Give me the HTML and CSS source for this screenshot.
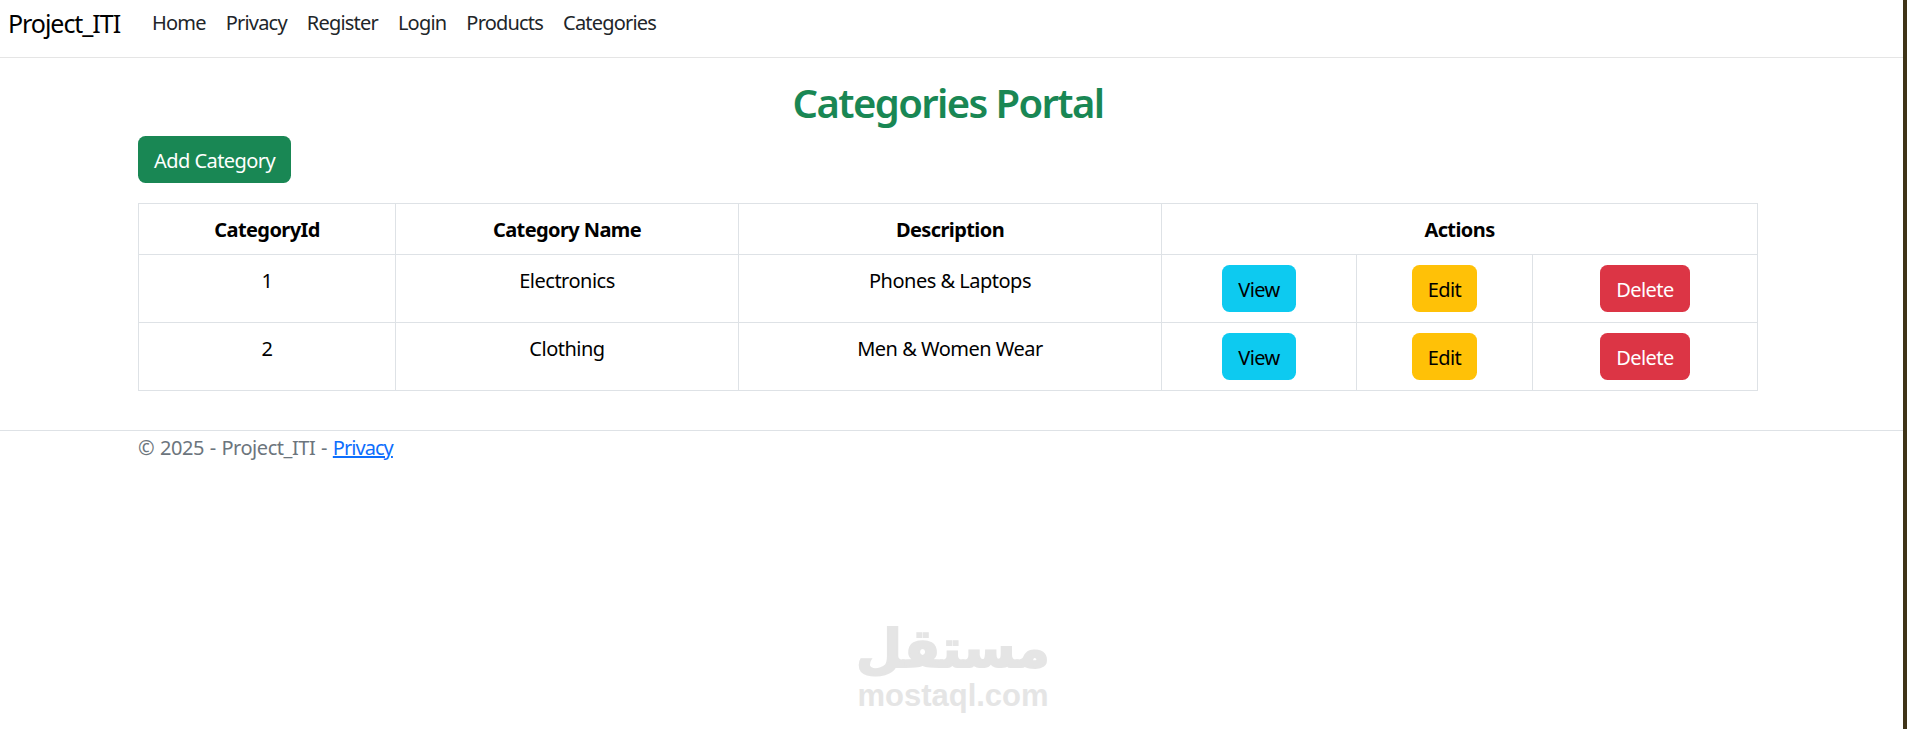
FILE: index.html
```html
<!DOCTYPE html>
<html lang="en">
<head>
  <meta charset="UTF-8" />
  <meta name="viewport" content="width=device-width, initial-scale=1.0"/>
  <title>Categories Portal - Project_ITI</title>
  <link rel="stylesheet" href="styles.css">
</head>
<body>
  <div class="page">
    <!-- Top Nav -->
    <nav class="navbar">
      <a class="brand" href="#">Project_ITI</a>
      <ul class="nav-links">
        <li><a href="#">Home</a></li>
        <li><a href="#">Privacy</a></li>
        <li><a href="#">Register</a></li>
        <li><a href="#">Login</a></li>
        <li><a href="#">Products</a></li>
        <li><a href="#">Categories</a></li>
      </ul>
    </nav>

    <main class="container">
      <h1 class="title">Categories Portal</h1>
      <a class="btn btn-success" href="#">Add Category</a>

      <table class="grid">
        <colgroup>
          <col class="col-id">
          <col class="col-name">
          <col class="col-desc">
          <col class="col-view">
          <col class="col-edit">
          <col class="col-delete">
        </colgroup>
        <thead>
          <tr>
            <th>CategoryId</th>
            <th>Category Name</th>
            <th>Description</th>
            <th colspan="3">Actions</th>
          </tr>
        </thead>
        <tbody>
          <tr>
            <td>1</td>
            <td>Electronics</td>
            <td>Phones &amp; Laptops</td>
            <td class="action"><a class="btn btn-info" href="#">View</a></td>
            <td class="action"><a class="btn btn-warning" href="#">Edit</a></td>
            <td class="action"><a class="btn btn-danger" href="#">Delete</a></td>
          </tr>
          <tr>
            <td>2</td>
            <td>Clothing</td>
            <td>Men &amp; Women Wear</td>
            <td class="action"><a class="btn btn-info" href="#">View</a></td>
            <td class="action"><a class="btn btn-warning" href="#">Edit</a></td>
            <td class="action"><a class="btn btn-danger" href="#">Delete</a></td>
          </tr>
        </tbody>
      </table>
    </main>

    <footer class="footer">
      <div class="footer-inner">© 2025 - Project_ITI - <a href="#">Privacy</a></div>
    </footer>
  </div>
  <div class="edge-strip"></div>

  <!-- Watermark -->
  <div class="watermark">
    <span class="wm-ar" lang="ar" dir="rtl">مستقل</span>
    <span class="wm-en">mostaql.com</span>
  </div>
</body>
</html>
```

FILE: styles.css
```css
* {
  box-sizing: border-box;
}

body {
  margin: 0;
  height: 729px;
  display: flex;
  overflow: hidden;
  background: #fff;
  color: #000;
  font-family: "Noto Sans", sans-serif;
  font-size: 20px;
  line-height: 1.5;
  letter-spacing: -0.5px;
}

.page {
  flex: 1;
  min-width: 0;
}

.edge-strip {
  width: 4px;
  background: #3f3418;
}

/* Top Nav */
.navbar {
  display: flex;
  height: 58px;
  padding: 0 8px 11px;
  border-bottom: 1px solid #e5e5e5;
}

.brand {
  width: 134px;
  padding-top: 5px;
  color: #000;
  font-size: 25px;
  letter-spacing: -1.05px;
  text-decoration: none;
}

.nav-links {
  display: flex;
  margin: 0;
  padding: 0;
  list-style: none;
}

.nav-links a {
  display: block;
  padding: 8px 10px;
  color: #212529;
  letter-spacing: -0.8px;
  text-decoration: none;
}

/* Main */
.container {
  padding: 21px 145px 0 138px;
}

.title {
  margin: 0 0 9px;
  color: #198754;
  font-size: 40px;
  font-weight: 600;
  line-height: 48px;
  letter-spacing: -1.6px;
  text-align: center;
}

.btn {
  display: inline-block;
  padding: 8.5px 15px 6.5px;
  border: 1px solid transparent;
  border-radius: 7.5px;
  letter-spacing: -0.55px;
  text-decoration: none;
}

.btn-success { background: #198754; color: #fff; }
.btn-info { background: #0dcaf0; color: #000; }
.btn-warning { background: #ffc107; color: #000; }
.btn-danger { background: #dc3545; color: #fff; }

/* Table */
.grid {
  width: 1619px;
  margin: 20px 0;
  table-layout: fixed;
  border-collapse: collapse;
  text-align: center;
}

.col-id { width: 257px; }
.col-name { width: 343px; }
.col-desc { width: 423px; }
.col-view { width: 195px; }
.col-edit { width: 176px; }
.col-delete { width: 225px; }

.grid th,
.grid td {
  padding: 11px 10px 9px;
  border: 1px solid #dee2e6;
  vertical-align: top;
}

.grid th {
  letter-spacing: -0.6px;
}

.grid td.action {
  padding: 10px;
}

/* Footer */
.footer {
  margin-top: 39px;
  border-top: 1px solid #dee2e6;
  color: #6c757d;
}

.footer-inner {
  padding-left: 138px;
  letter-spacing: -0.45px;
  word-spacing: 1px;
  line-height: 33px;
}

.footer a {
  color: #0d6efd;
  letter-spacing: -0.95px;
}

/* Watermark */
.watermark {
  position: absolute;
  left: 857px;
  top: 618px;
  width: 192px;
  display: flex;
  flex-direction: column;
  align-items: center;
  color: #e5e5e5;
  font-weight: 700;
  letter-spacing: 0;
}

.wm-ar {
  font-family: "DejaVu Sans", sans-serif;
  font-size: 53px;
  line-height: 62px;
  -webkit-text-stroke: 2px #e5e5e5;
}

.wm-en {
  font-family: "Liberation Sans", sans-serif;
  font-size: 31px;
  line-height: 32px;
}
```
